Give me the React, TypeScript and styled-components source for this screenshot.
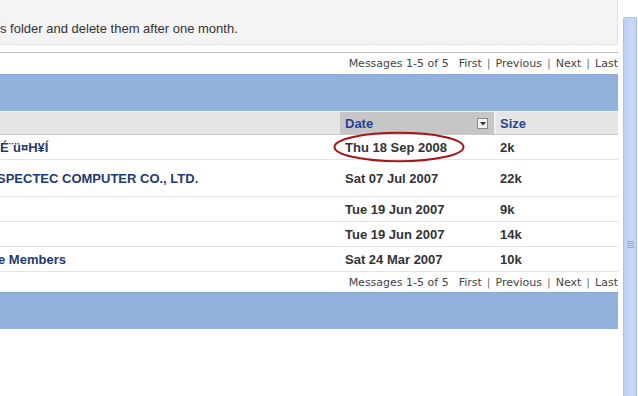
import React from 'react';
import styled, { createGlobalStyle } from 'styled-components';

const GlobalStyle = createGlobalStyle`
    html, body {
        margin: 0;
        padding: 0;
        background: #fff;
    }
    body {
        width: 638px;
        height: 396px;
        overflow: hidden;
    }
`;

type Message = {
    subject: string;
    shift?: number;
    date: string;
    size: string;
    tall?: boolean;
    circled?: boolean;
};

const messages: Message[] = [
    { subject: 'É¨ü¤H¥Í', date: 'Thu 18 Sep 2008', size: '2k', circled: true },
    { subject: 'SPECTEC COMPUTER CO., LTD.', shift: -3, date: 'Sat 07 Jul 2007', size: '22k', tall: true },
    { subject: '', date: 'Tue 19 Jun 2007', size: '9k' },
    { subject: '', date: 'Tue 19 Jun 2007', size: '14k' },
    { subject: 'e Members', shift: -2, date: 'Sat 24 Mar 2007', size: '10k' },
];

const Pager = ({ top }: { top?: boolean }) => (
    <PagerRow $top={top}>
        <span>Messages 1-5 of 5</span>
        <PagerLinks>
            <PagerLink>First</PagerLink>
            <Sep>|</Sep>
            <PagerLink>Previous</PagerLink>
            <Sep>|</Sep>
            <PagerLink>Next</PagerLink>
            <Sep>|</Sep>
            <PagerLink>Last</PagerLink>
        </PagerLinks>
    </PagerRow>
);

const SortIcon = () => (
    <SortBox>
        <svg width='6' height='4' viewBox='0 0 6 4'>
            <path d='M0 0 L6 0 L3 3.5 Z' fill='#333' />
        </svg>
    </SortBox>
);

export default function App() {
    return (
        <>
            <GlobalStyle />
            <Page>
                <Main>
                    <Notice>s folder and delete them after one month.</Notice>
                    <Pager top />
                    <BlueBand />
                    <HeaderRow>
                        <SubjectHead />
                        <DateHead>
                            <HeadLabel>Date</HeadLabel>
                            <SortIcon />
                        </DateHead>
                        <SizeHead>
                            <HeadLabel>Size</HeadLabel>
                        </SizeHead>
                    </HeaderRow>
                    {messages.map((m, i) => (
                        <Row key={i} $tall={m.tall}>
                            <SubjectCell>
                                <SubjectLink $shift={m.shift ?? 0}>{m.subject}</SubjectLink>
                            </SubjectCell>
                            <DateCell>
                                {m.date}
                                {m.circled && (
                                    <Circle width='134' height='33' viewBox='0 0 134 33'>
                                        <ellipse cx='66' cy='16' rx='64.5' ry='14.2' fill='none' stroke='#a5161b' strokeWidth='2' />
                                    </Circle>
                                )}
                            </DateCell>
                            <SizeCell>{m.size}</SizeCell>
                        </Row>
                    ))}
                    <Pager />
                    <BlueBand />
                </Main>
                <ScrollTrack>
                    <Thumb>
                        <Grip />
                    </Thumb>
                </ScrollTrack>
            </Page>
        </>
    );
}

const Page = styled.div`
    display: flex;
    width: 638px;
    height: 396px;
    overflow: hidden;
    font-family: 'Liberation Sans', Arial, sans-serif;
`;

const Main = styled.div`
    width: 618px;
    display: flex;
    flex-direction: column;
`;

const Notice = styled.div`
    height: 45px;
    flex-shrink: 0;
    box-sizing: border-box;
    padding-top: 21px;
    background: #f4f4f4;
    border-bottom: 1px solid #e2e2e2;
    border-right: 1px solid #e2e2e2;
    font-size: 13px;
    color: #333;
    line-height: 16px;
    white-space: nowrap;
`;

const PagerRow = styled.div<{ $top?: boolean }>`
    height: ${({ $top }) => ($top ? '21px' : '20px')};
    flex-shrink: 0;
    margin-top: ${({ $top }) => ($top ? '7px' : '0')};
    border-top: ${({ $top }) => ($top ? '1px solid #c2c2c2' : 'none')};
    display: flex;
    justify-content: flex-end;
    align-items: center;
    gap: 10px;
    font-family: 'DejaVu Sans', Verdana, sans-serif;
    font-size: 11px;
    color: #444;
    white-space: nowrap;
`;

const PagerLinks = styled.span`
    display: flex;
    gap: 5px;
`;

const PagerLink = styled.span`
    color: #444;
`;

const Sep = styled.span`
    color: #777;
`;

const BlueBand = styled.div`
    height: 37px;
    flex-shrink: 0;
    background: #93b1dd;
    border-top: 1px solid #8ca7d4;
    box-sizing: border-box;
`;

const HeaderRow = styled.div`
    display: grid;
    grid-template-columns: 340px 156px 1fr;
    height: 24px;
    flex-shrink: 0;
    box-sizing: border-box;
    border-top: 1px solid #f6f6f6;
    border-bottom: 1px solid #c9c9c9;
    background: #e5e5e5;
`;

const SubjectHead = styled.div``;

const DateHead = styled.div`
    display: flex;
    align-items: center;
    justify-content: space-between;
    padding: 0 6px 0 5px;
    background: #c6c6c6;
    border-right: 2px solid #eeeeee;
`;

const SizeHead = styled.div`
    display: flex;
    align-items: center;
    padding-left: 4px;
`;

const HeadLabel = styled.span`
    font-size: 13px;
    font-weight: bold;
    color: #1f4496;
`;

const SortBox = styled.span`
    width: 9px;
    height: 9px;
    border: 1px solid #8a8a8a;
    background: #f2f2f2;
    display: flex;
    align-items: center;
    justify-content: center;
    margin-top: 1px;
`;

const Row = styled.div<{ $tall?: boolean }>`
    display: grid;
    grid-template-columns: 340px 156px 1fr;
    height: ${({ $tall }) => ($tall ? '37px' : '25px')};
    flex-shrink: 0;
    box-sizing: border-box;
    border-bottom: 1px solid #e2e2e2;
    align-items: center;
    font-size: 13px;
    font-weight: bold;
`;

const SubjectCell = styled.div`
    overflow: hidden;
    white-space: nowrap;
`;

const SubjectLink = styled.span<{ $shift: number }>`
    display: inline-block;
    margin-left: ${({ $shift }) => $shift}px;
    color: #1f3a70;
`;

const DateCell = styled.div`
    position: relative;
    padding-left: 5px;
    color: #333;
`;

const SizeCell = styled.div`
    padding-left: 4px;
    color: #333;
`;

const Circle = styled.svg`
    position: absolute;
    left: -7px;
    top: -9px;
    pointer-events: none;
`;

const ScrollTrack = styled.div`
    width: 20px;
    display: flex;
    padding: 17px 1px 0 5px;
    box-sizing: border-box;
    background: #fff;
`;

const Thumb = styled.div`
    flex: 1;
    height: 460px;
    box-sizing: border-box;
    border: 1px solid #a9c1ee;
    border-bottom: none;
    border-radius: 2px 2px 0 0;
    background: linear-gradient(to right, #bcd0f6, #c8daf9 60%, #bed2f6);
    display: flex;
    justify-content: center;
    padding-top: 223px;
`;

const Grip = styled.div`
    width: 7px;
    height: 7px;
    background: repeating-linear-gradient(to bottom, #8ea9dc 0 1px, transparent 1px 2px);
`;
